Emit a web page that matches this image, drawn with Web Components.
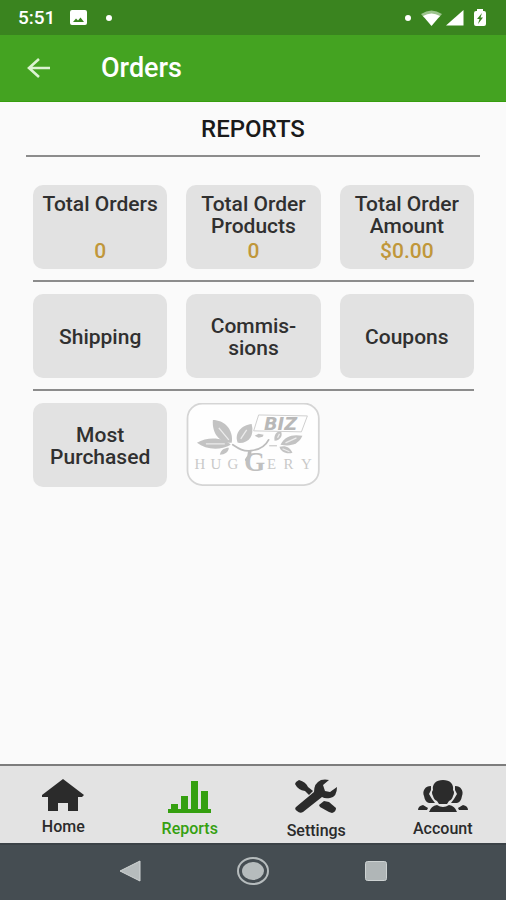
<!DOCTYPE html>
<html lang="en">
<head>
<meta charset="utf-8">
<meta name="viewport" content="width=device-width, initial-scale=1">
<title>Orders</title>
<style>
body { margin: 0; background: #fafafa; color: #303030; font-family: Roboto, "Noto Sans", sans-serif; font-weight: 500; }
</style>
</head>
<body>
<orders-app></orders-app>

<template id="status-bar">
<style>
:host { display: flex; align-items: center; justify-content: space-between; height: 35px; padding: 0 20px 0 18px; background: #3a841f; color: #fff; font-size: 19px; box-sizing: border-box; }
div { display: flex; align-items: center; }
svg { display: block; }
.left { gap: 15px; }
.right { gap: 10px; }
i { width: 6px; height: 6px; border-radius: 50%; background: #fff; }
.left i { margin-left: 4px; }
.pair { gap: 4px; }
</style>
<div class="left"><span>5:51</span>
<svg width="17" height="15" viewBox="0 0 17 15"><path fill="#fff" fill-rule="evenodd" d="M2 0H15Q17 0 17 2V13Q17 15 15 15H2Q0 15 0 13V2Q0 0 2 0ZM3 12H14L10.500 7.500L8 10.500L6 8.500Z"/></svg>
<i></i></div>
<div class="right"><i></i><div class="pair">
<svg width="21" height="16" viewBox="0 0 21 16"><path fill="#9cc38d" d="M0 4Q10.500-3 21 4L18 7.500Q10.500 3 3 7.500Z"/><path fill="#fff" d="M2 6Q10.500 1 19 6L10.500 16Z"/></svg>
<svg width="18" height="16" viewBox="0 0 18 16"><path fill="#fff" d="M17.500 0V15.500H0Z"/></svg></div>
<svg width="12" height="17" viewBox="0 0 12 17"><path fill="#fff" d="M3 2V0H9V2H10Q12 2 12 4V15Q12 17 10 17H2Q0 17 0 15V4Q0 2 2 2Z"/><path fill="#3a841f" d="M8 4L3 10H5.500L4 15L9 8.500H6.500Z"/></svg></div>
</template>

<template id="app-header">
<style>
:host { display: flex; align-items: center; height: 67px; padding: 0 24px; background: #44a321; border-bottom: 1px solid #379e0e; color: #fff; box-sizing: border-box; }
button { display: flex; width: 30px; height: 40px; padding: 0; border: 0; background: none; align-items: center; justify-content: center; }
h1 { margin: 0 0 0 47px; font-size: 27px; font-weight: 500; line-height: 32px; }
</style>
<button aria-label="Back"><svg width="24" height="20" viewBox="0 0 24 20" fill="none" stroke="#dcf3d2" stroke-width="2.600"><path d="M23 10H2M12 1L2 10L12 19"/></svg></button>
<h1><slot></slot></h1>
</template>

<template id="report-card">
<style>
:host { display: grid; }
button { display: flex; flex-direction: column; align-items: center; justify-content: center; min-height: 84px; padding: 8px 0 7px; border: 0; border-radius: 10px; background: #e2e2e2; color: #303030; font: 500 21px/22px Roboto, "Noto Sans", sans-serif; text-align: center; }
:host([stat]) button { justify-content: space-between; }
.value { color: #c0973a; }
:host(:not([stat])) .value { display: none; }
</style>
<button><span><slot></slot></span><span class="value"><slot name="value"></slot></span></button>
</template>

<template id="card-row">
<style>
:host { display: grid; grid-template-columns: repeat(3, 1fr); gap: 19px; padding-bottom: 11px; margin-bottom: 12px; border-bottom: 2px solid #8c8c8c; }
:host([last]) { border: 0; margin: 0; }
</style>
<slot></slot>
</template>

<template id="huggery-logo">
<style>
:host { display: block; }
button { display: block; width: 100%; padding: 0; border: 0; background: none; }
svg { display: block; width: 100%; height: auto; }
text { font-family: "Liberation Serif", serif; fill: #c9c9c9; text-anchor: middle; font-weight: 400; }
</style>
<button aria-label="Biz Huggery">
<svg viewBox="0 0 135 84">
<rect x="1.500" y="0.500" width="132" height="82" rx="15" fill="#fefefe" stroke="#d5d5d5" stroke-width="1.800"/>
<g fill="#c3c3c3">
<path d="M27 17C38 17 48 26 46 40C33 40 26 30 27 17Z"/>
<path d="M66 21C69 33 63 41 52 40C48 30 56 22 66 21Z"/>
<path d="M11 40C21 34 37 34 45 42C34 48 20 47 11 40Z"/>
<path d="M34 52C35 47 39 45 43 45C43 49 39 52 34 52Z"/>
<path d="M95 42C99 33 108 31 117 33C113 42 105 44 95 42Z"/>
<path d="M89 38C88 32 91 29 95 28C98 32 95 38 89 38Z"/>
<path d="M94 44C100 42 105 45 107 50C101 52 95 49 94 44Z"/>
<path d="M69 33L73 31L78 32L77 34L73 35Z"/>
</g>
<g fill="none" stroke="#ececec" stroke-width="1.300">
<path d="M33 25L43 37M61 27L55 36M20 41H39M100 40L111 35M92 35L94 31M97 46L104 49"/>
</g>
<g fill="none" stroke="#bdbdbd" stroke-linecap="round">
<path stroke-width="1.800" d="M47 42C53 46 58 49 65 48C73 47 80 43 83 37"/>
<path stroke-width="1" d="M84 43H91"/>
<path stroke-width="3.500" d="M64 49Q64 54 61 57"/>
</g>
<path d="M73 12L122 13L116 29L68 28Z" fill="#fefefe" stroke="#cfcfcf"/>
<text x="95" y="27" style="font:italic 700 18px 'DejaVu Sans',sans-serif;fill:#b8b8b8">BIZ</text>
<g font-size="15">
<text x="14" y="66">H</text><text x="30" y="66">U</text><text x="47" y="66">G</text>
<text x="69" y="68" style="font-size:27px;font-weight:700;fill:#c0c0c0">G</text>
<text x="86" y="66">E</text><text x="103" y="66">R</text><text x="121" y="66">Y</text>
</g>
</svg></button>
</template>

<template id="tab-bar">
<style>
:host { display: grid; grid-template-columns: repeat(4, 1fr); min-height: 79px; border-top: 2px solid #7d7d7d; background: #e3e3e3; box-sizing: border-box; }
a { display: flex; flex-direction: column; align-items: center; padding-top: 13px; color: #2b2b2b; font-size: 16px; line-height: 20px; text-decoration: none; gap: 6px; }
a[aria-current] { color: #35a010; }
svg { display: block; fill: currentColor; }
</style>
<a href="#home"><svg width="42" height="32" viewBox="0 0 42 32"><path d="M21 0L42 16L40 18H36V32H26V24H16V32H6V18H0V16Z"/></svg>Home</a>
<a href="#reports" aria-current="page"><svg width="43" height="34" viewBox="0 0 43 34"><path d="M0 30H3V25H10V30H13V17H20V30H23V2H30V30H33V12H40V30H43V34H0Z"/></svg>Reports</a>
<a href="#settings"><svg width="44" height="36" viewBox="0 0 44 36"><path d="M2 3L5 1Q12 3 14 8L19 12L15 16L11 12Q4 11 1 5Z"/><path d="M2 28L20 13Q20 4 27 1Q31 0 35 1L29 6L31 12L36 13L43 8Q43 18 36 19Q31 20 28 18L9 33Q6 35 3 32Q0 30 2 28Z"/><path d="M25 26L30 22L35 23L42 29Q42 33 38 34L35 33L26 28Z"/></svg>Settings</a>
<a href="#account"><svg width="50" height="34" viewBox="0 0 50 34"><path d="M25 1C32 1 36 5 35 11Q37 13 35 17Q34 21 31 22L29 25H21L19 22Q16 21 15 17Q13 13 15 11C14 5 18 1 25 1Z"/><path d="M13 7C7 7 4 12 6 17Q7 23 11 24H17L14 20L11 15L13 11ZM37 7C43 7 46 12 44 17Q43 23 39 24H33L36 20L39 15L37 11Z"/><path d="M11 33Q13 27 19 26Q25 30 31 26Q37 27 39 33ZM0 31Q0 27 5 26L10 29L9 31ZM50 31Q50 27 45 26L40 29L41 31Z"/></svg>Account</a>
</template>

<template id="system-nav">
<style>
:host { display: grid; grid-template-columns: repeat(3, 123px); justify-content: center; height: 57px; padding-bottom: 3px; background: #454d52; border-top: 2px solid #3b4247; box-sizing: border-box; }
button { display: flex; align-items: center; justify-content: center; padding: 0; border: 0; background: none; }
svg { display: block; }
</style>
<button aria-label="Back"><svg width="22" height="22" viewBox="0 0 22 22"><path fill="#b6bcbd" stroke="#d0d4d4" d="M1 11L21 1V21Z"/></svg></button>
<button aria-label="Home"><svg width="32" height="28" viewBox="0 0 32 28"><ellipse cx="16" cy="14" rx="15" ry="13" fill="none" stroke="#b6bcbd" stroke-width="2"/><ellipse cx="16" cy="14" rx="11" ry="9" fill="#b6bcbd"/></svg></button>
<button aria-label="Overview"><svg width="22" height="20" viewBox="0 0 22 20"><rect x=".5" y=".5" width="21" height="19" rx="2" fill="#b0b6b7" stroke="#cdd2d2"/></svg></button>
</template>

<template id="orders-app">
<style>
:host { display: flex; flex-direction: column; min-height: 100vh; }
main { flex: 1; }
h2 { margin: 0 26px; padding: 12px 0 10px; border-bottom: 2px solid #8c8c8c; color: #1a1a1a; font-size: 24px; line-height: 31px; font-weight: 500; text-align: center; }
section { margin: 28px 32px 20px 33px; }
</style>
<status-bar></status-bar>
<app-header>Orders</app-header>
<main>
<h2>REPORTS</h2>
<section>
<card-row>
<report-card stat>Total Orders<span slot="value">0</span></report-card>
<report-card stat>Total Order<br>Products<span slot="value">0</span></report-card>
<report-card stat>Total Order<br>Amount<span slot="value">$0.00</span></report-card>
</card-row>
<card-row>
<report-card>Shipping</report-card>
<report-card>Commis-<br>sions</report-card>
<report-card>Coupons</report-card>
</card-row>
<card-row last>
<report-card>Most<br>Purchased</report-card>
<huggery-logo></huggery-logo>
</card-row>
</section>
</main>
<tab-bar></tab-bar>
<system-nav></system-nav>
</template>

<script>
class TemplateElement extends HTMLElement {
  constructor() {
    super();
    const template = document.getElementById(this.localName);
    this.attachShadow({ mode: "open" }).append(template.content.cloneNode(true));
  }
}
for (const name of ["status-bar", "app-header", "report-card", "card-row", "huggery-logo", "tab-bar", "system-nav", "orders-app"]) {
  customElements.define(name, class extends TemplateElement {});
}
</script>
</body>
</html>
